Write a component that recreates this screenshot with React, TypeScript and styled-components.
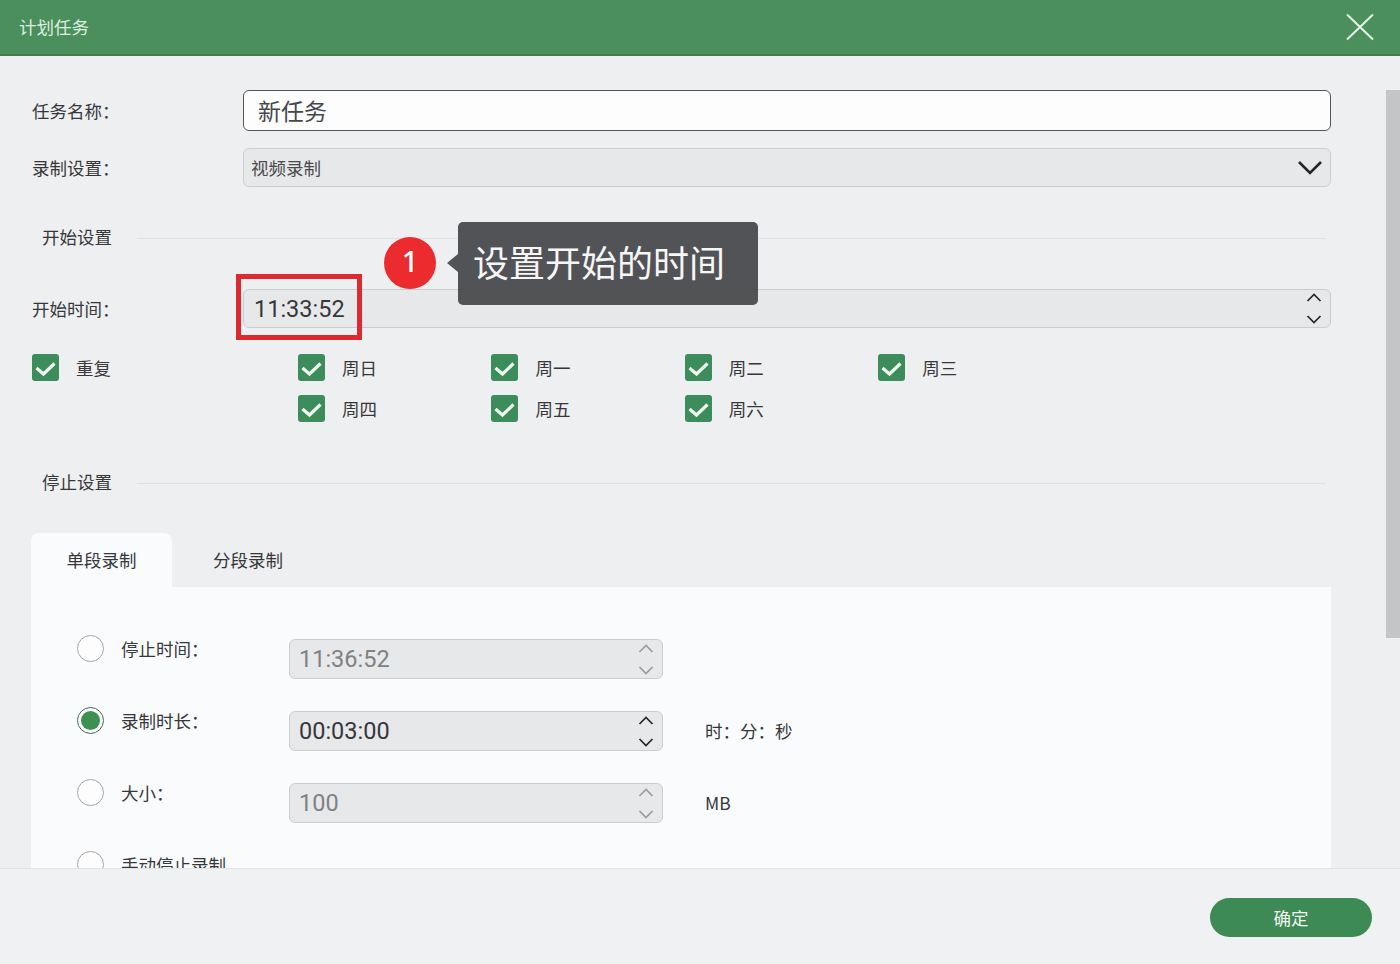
import React from 'react';
import styled, { createGlobalStyle } from 'styled-components';

const CJK = '"Noto Sans CJK SC", "Noto Sans", sans-serif';
const DIGITS = 'Roboto, "Noto Sans CJK SC", sans-serif';

const GlobalStyle = createGlobalStyle`
  html, body {
    margin: 0;
    padding: 0;
    background: #eeeff1;
  }
  * {
    box-sizing: border-box;
  }
`;

const Window = styled.div`
  width: 1400px;
  height: 964px;
  display: flex;
  flex-direction: column;
  overflow: hidden;
  background: #eeeff1;
  font-family: ${CJK};
  font-size: 17.5px;
  color: #37373a;
`;

const TitleBar = styled.header`
  flex: none;
  height: 56px;
  display: flex;
  align-items: center;
  justify-content: space-between;
  padding: 0 26px 0 19px;
  background: #4a8f5c;
  border-bottom: 2px solid #3f7a50;
  color: #dcefe0;
`;

const TitleText = styled.span`
  padding-bottom: 2px;
`;

const Main = styled.main`
  flex: 1;
  min-height: 0;
  display: flex;
  overflow: hidden;
`;

const Content = styled.div`
  flex: 1;
  padding: 34px 55px 0 31px;
`;

const ScrollTrack = styled.div`
  flex: none;
  width: 14px;
  padding-top: 34px;
`;

const ScrollThumb = styled.div`
  height: 548px;
  background: #c4c5c7;
`;

const FormRow = styled.div<{ $top?: number }>`
  display: grid;
  grid-template-columns: 212px 1fr;
  align-items: center;
  margin-top: ${({ $top }) => $top ?? 0}px;
`;

const FormLabel = styled.label`
  padding-left: 1px;
`;

const NameInput = styled.div`
  height: 41px;
  display: flex;
  align-items: center;
  padding: 0 0 2px 14px;
  background: #fdfdfe;
  border: 1.5px solid #55565a;
  border-radius: 6px;
  font-size: 23px;
  color: #47474a;
`;

const GreyField = styled.div<{ $height?: number }>`
  position: relative;
  height: ${({ $height }) => $height ?? 40}px;
  display: flex;
  align-items: center;
  justify-content: space-between;
  background: #e7e8ea;
  border: 1.5px solid #cbccce;
  border-radius: 6px;
`;

const SelectValue = styled.span`
  padding-left: 7px;
  color: #4a4a4d;
`;

const TimeValue = styled.span<{ $muted?: boolean; $inset?: number }>`
  padding-left: ${({ $inset }) => $inset ?? 10}px;
  font-family: ${DIGITS};
  font-size: 23.5px;
  color: ${({ $muted }) => ($muted ? '#808183' : '#37373a')};
`;

const SelectArrow = styled.svg`
  width: 26px;
  height: 16px;
  margin-right: 7px;
  fill: none;
  stroke: #26262a;
  stroke-width: 2.6;
`;

const Stepper = styled.div<{ $muted?: boolean }>`
  width: 16px;
  margin-right: 8px;
  display: flex;
  flex-direction: column;
  gap: 13px;
  stroke: ${({ $muted }) => ($muted ? '#9a9b9d' : '#26262a')};
`;

const StepArrow = styled.svg`
  display: block;
  width: 16px;
  height: 9px;
  fill: none;
  stroke: inherit;
  stroke-width: 1.7;
`;

const SectionHead = styled.div<{ $top: number }>`
  display: flex;
  align-items: center;
  gap: 25px;
  height: 24px;
  margin: ${({ $top }) => $top}px 5px 0 11px;
`;

const SectionTitle = styled.span`
  padding-bottom: 3px;
`;

const SectionLine = styled.div`
  flex: 1;
  height: 1px;
  background: #e0e1e3;
`;

const RedFrame = styled.div`
  position: absolute;
  left: -8px;
  top: -16px;
  width: 126px;
  height: 66px;
  border: 5px solid #dc2a30;
`;

const Badge = styled.div`
  position: absolute;
  left: 140px;
  top: -53px;
  width: 52px;
  height: 52px;
  display: flex;
  align-items: center;
  justify-content: center;
  padding-bottom: 5px;
  border-radius: 50%;
  background: #ec2b2f;
  color: #fff;
  font-family: "Noto Sans", sans-serif;
  font-weight: 500;
  font-size: 29px;
`;

const Callout = styled.div`
  position: absolute;
  left: 214px;
  top: -68px;
  width: 300px;
  height: 83px;
  display: flex;
  align-items: center;
  padding: 0 0 6px 15px;
  background: rgba(72, 73, 75, 0.94);
  border-radius: 5px;
  color: #f6f6f6;
  font-size: 36px;
  white-space: nowrap;

  &::before {
    content: '';
    position: absolute;
    left: -11px;
    top: 32px;
    border-style: solid;
    border-width: 9px 11px 9px 0;
    border-color: transparent rgba(72, 73, 75, 0.94) transparent transparent;
  }
`;

const RepeatRow = styled.div`
  display: grid;
  grid-template-columns: 266px 1fr;
  align-items: start;
  margin-top: 26px;
  padding-left: 1px;
`;

const WeekGrid = styled.div`
  display: grid;
  grid-template-columns: repeat(4, 193.4px);
  row-gap: 14px;
`;

const CheckItem = styled.div`
  display: flex;
  align-items: center;
  gap: 17px;
  height: 27px;
`;

const CheckBox = styled.svg`
  flex: none;
  display: block;
  width: 27px;
  height: 27px;
`;

const Tabs = styled.div`
  display: flex;
  margin-top: 38px;
`;

const Tab = styled.div<{ $active?: boolean }>`
  width: ${({ $active }) => ($active ? 141 : 152)}px;
  height: 54px;
  display: flex;
  align-items: center;
  justify-content: center;
  padding-bottom: 1px;
  border-radius: 8px 8px 0 0;
  background: ${({ $active }) => ($active ? '#fafbfd' : 'transparent')};
`;

const Panel = styled.section`
  width: 1300px;
  height: 320px;
  padding: 48px 0 0 46px;
  background: #fafbfd;
  display: flex;
  flex-direction: column;
  gap: 28px;
`;

const StopRow = styled.div`
  display: grid;
  grid-template-columns: 26px 186px 374px auto;
  align-items: start;
  height: 44px;
`;

const Radio = styled.div<{ $checked?: boolean }>`
  width: 27px;
  height: 27px;
  border-radius: 50%;
  background: #fdfdfe;
  border: 1.5px solid ${({ $checked }) => ($checked ? '#3f6b4e' : '#a4a5a7')};
  display: flex;
  align-items: center;
  justify-content: center;

  &::after {
    content: '';
    display: ${({ $checked }) => ($checked ? 'block' : 'none')};
    width: 19px;
    height: 19px;
    border-radius: 50%;
    background: #3d9150;
  }
`;

const StopLabel = styled.span`
  padding-left: 18px;
  line-height: 28px;
`;

const SpinField = styled(GreyField)`
  margin-top: 4px;
`;

const Unit = styled.span`
  padding: 9px 0 0 42px;
  line-height: 30px;
`;

const Footer = styled.footer`
  flex: none;
  height: 96px;
  display: flex;
  justify-content: flex-end;
  padding: 29px 28px 0 0;
  background: #f0f1f3;
  border-top: 1.5px solid #e3e4e6;
`;

const ConfirmButton = styled.button`
  width: 162px;
  height: 39px;
  border: none;
  border-radius: 20px;
  background: #3d8a55;
  color: #f2f7f2;
  font-family: ${CJK};
  font-size: 17.5px;
`;

const CloseIcon = () => (
  <svg width="28" height="28" viewBox="0 0 28 28" fill="none" stroke="#e6f3e8" strokeWidth="2">
    <path d="M1 1.5 27 26.5M27 1.5 1 26.5" />
  </svg>
);

const Spinner = ({ muted }: { muted?: boolean }) => (
  <Stepper $muted={muted}>
    <StepArrow viewBox="0 0 16 9">
      <path d="M1.5 8 8 1.5 14.5 8" />
    </StepArrow>
    <StepArrow viewBox="0 0 16 9">
      <path d="M1.5 1 8 7.5 14.5 1" />
    </StepArrow>
  </Stepper>
);

const Check = ({ label }: { label: string }) => (
  <CheckItem>
    <CheckBox viewBox="0 0 27 27">
      <rect width="27" height="27" rx="3" fill="#3d8c5b" />
      <path d="M4.5 14 11.5 20 22.5 9.5" fill="none" stroke="#eef7ee" strokeWidth="3.2" />
    </CheckBox>
    <span>{label}</span>
  </CheckItem>
);

const weekDays = ['周日', '周一', '周二', '周三', '周四', '周五', '周六'];

const stopRows = [
  { label: '停止时间：', value: '11:36:52', muted: true },
  { label: '录制时长：', value: '00:03:00', checked: true, unit: '时：分：秒' },
  { label: '大小：', value: '100', muted: true, unit: 'MB' },
];

export default function App() {
  return (
    <>
      <GlobalStyle />
      <Window>
        <TitleBar>
          <TitleText>计划任务</TitleText>
          <CloseIcon />
        </TitleBar>

        <Main>
          <Content>
            <FormRow>
              <FormLabel>任务名称：</FormLabel>
              <NameInput>新任务</NameInput>
            </FormRow>
            <FormRow $top={17}>
              <FormLabel>录制设置：</FormLabel>
              <GreyField $height={39}>
                <SelectValue>视频录制</SelectValue>
                <SelectArrow viewBox="0 0 26 16">
                  <path d="M2 2 13 13 24 2" />
                </SelectArrow>
              </GreyField>
            </FormRow>

            <SectionHead $top={39}>
              <SectionTitle>开始设置</SectionTitle>
              <SectionLine />
            </SectionHead>
            <FormRow $top={39}>
              <FormLabel>开始时间：</FormLabel>
              <GreyField $height={39}>
                <TimeValue>11:33:52</TimeValue>
                <Spinner />
                <RedFrame />
                <Badge>1</Badge>
                <Callout>设置开始的时间</Callout>
              </GreyField>
            </FormRow>

            <RepeatRow>
              <Check label="重复" />
              <WeekGrid>
                {weekDays.map((day) => (
                  <Check key={day} label={day} />
                ))}
              </WeekGrid>
            </RepeatRow>

            <SectionHead $top={49}>
              <SectionTitle>停止设置</SectionTitle>
              <SectionLine />
            </SectionHead>

            <Tabs>
              <Tab $active>单段录制</Tab>
              <Tab>分段录制</Tab>
            </Tabs>
            <Panel>
              {stopRows.map((row) => (
                <StopRow key={row.label}>
                  <Radio $checked={row.checked} />
                  <StopLabel>{row.label}</StopLabel>
                  <SpinField>
                    <TimeValue $muted={row.muted} $inset={9}>{row.value}</TimeValue>
                    <Spinner muted={row.muted} />
                  </SpinField>
                  {row.unit && <Unit>{row.unit}</Unit>}
                </StopRow>
              ))}
              <StopRow>
                <Radio />
                <StopLabel>手动停止录制</StopLabel>
              </StopRow>
            </Panel>
          </Content>
          <ScrollTrack>
            <ScrollThumb />
          </ScrollTrack>
        </Main>

        <Footer>
          <ConfirmButton>确定</ConfirmButton>
        </Footer>
      </Window>
    </>
  );
}
